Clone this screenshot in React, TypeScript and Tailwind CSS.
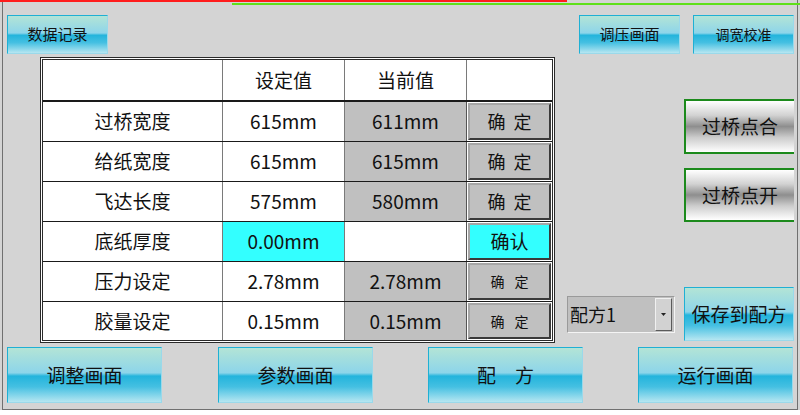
import React from 'react'

type Row = {
  label: string
  set: string
  cur: string
  btn: string
  kind: 'normal' | 'cyan' | 'small'
}

const rows: Row[] = [
  { label: '过桥宽度', set: '615mm', cur: '611mm', btn: '确 定', kind: 'normal' },
  { label: '给纸宽度', set: '615mm', cur: '615mm', btn: '确 定', kind: 'normal' },
  { label: '飞达长度', set: '575mm', cur: '580mm', btn: '确 定', kind: 'normal' },
  { label: '底纸厚度', set: '0.00mm', cur: '', btn: '确认', kind: 'cyan' },
  { label: '压力设定', set: '2.78mm', cur: '2.78mm', btn: '确 定', kind: 'small' },
  { label: '胶量设定', set: '0.15mm', cur: '0.15mm', btn: '确 定', kind: 'small' },
]

const cyanBtn =
  'flex items-center justify-center border-t border-l border-[#1fb0d4] border-r border-r-[#9ad9ea] border-b border-b-[#9ad9ea] bg-[linear-gradient(to_bottom,#b3e4d6_0%,#8dd5ea_46%,#23b4dc_52%,#45c0e2_72%,#b6e6f1_100%)] text-[#111]'

const grayBtn =
  'flex items-center justify-center border-2 border-r-0 border-[#1c8a1c] bg-[linear-gradient(to_bottom,#ffffff_0%,#d2d2d2_28%,#8e8e8e_50%,#cdcdcd_72%,#ffffff_100%)] text-[#111] text-[19px]'

function ConfirmButton({ row }: { row: Row }) {
  const bg = row.kind === 'cyan' ? 'bg-[#33ffff]' : 'bg-[#c0c0c0]'
  return (
    <div className="h-full bg-white p-[1px]">
      <div
        className={`flex h-full items-center justify-center border-2 border-t-[#a6a6a6] border-l-[#a6a6a6] border-r-[#3a3a3a] border-b-[#3a3a3a] ${bg}`}
      >
        {row.kind === 'cyan' ? (
          <span className="text-[19px]">确认</span>
        ) : row.kind === 'small' ? (
          <span className="flex gap-[10px] text-[14px]">
            <span>确</span>
            <span>定</span>
          </span>
        ) : (
          <span className="flex gap-[8px] text-[18px]">
            <span>确</span>
            <span>定</span>
          </span>
        )}
      </div>
    </div>
  )
}

function DataTable() {
  return (
    <div className="h-[286px] w-[515px] border-[3px] border-double border-[#2a2a2a] bg-white text-[19px] text-[#111]">
      <div className="grid h-[40px] grid-cols-[179px_122px_122px_86px]">
        <div />
        <div className="flex items-center justify-center border-l border-[#7a7a7a]">设定值</div>
        <div className="flex items-center justify-center border-l border-[#7a7a7a]">当前值</div>
        <div className="border-l border-[#7a7a7a]" />
      </div>
      {rows.map((row, i) => (
        <div
          key={row.label}
          className={`grid grid-cols-[179px_122px_122px_86px] border-[#1a1a1a] ${
            i === 0 ? 'h-[41px] border-t-2' : i === rows.length - 1 ? 'h-[39px] border-t' : 'h-[40px] border-t'
          }`}
        >
          <div className="flex items-center justify-center">{row.label}</div>
          <div
            className={`flex items-center justify-center border-l border-[#7a7a7a] ${
              row.kind === 'cyan' ? 'bg-[#33ffff]' : ''
            }`}
          >
            {row.set}
          </div>
          <div
            className={`flex items-center justify-center border-l border-[#7a7a7a] ${
              row.kind === 'cyan' ? 'bg-white' : 'bg-[#c0c0c0]'
            }`}
          >
            {row.cur}
          </div>
          <div className="border-l border-[#555]">
            <ConfirmButton row={row} />
          </div>
        </div>
      ))}
    </div>
  )
}

export default function App() {
  return (
    <div className="relative h-[415px] w-[800px] overflow-hidden bg-white font-['Noto_Sans_CJK_SC',sans-serif] text-[#111]">
      <div className="relative h-[410px] bg-[#d4d4d4]">
        <div className="absolute left-0 top-0 h-[2px] w-[567px] bg-[#ff1c1c]" />
        <div className="absolute left-[232px] right-0 top-[3px] h-[2px] bg-[#5fe01a]" />

        <div className="ml-[2px] flex h-[410px] w-[796px] flex-col border-x border-b border-[#707070] pt-[15px]">
          {/* top buttons */}
          <div className="flex h-[39px]">
            <div className={`${cyanBtn} ml-[4px] w-[101px] text-[15px]`}>数据记录</div>
            <div className={`${cyanBtn} ml-auto w-[101px] text-[15px]`}>调压画面</div>
            <div className={`${cyanBtn} ml-[13px] mr-[3px] w-[101px] text-[14px]`}>调宽校准</div>
          </div>

          {/* table + right controls */}
          <div className="mt-[3px] flex h-[286px]">
            <div className="ml-[37px]">
              <DataTable />
            </div>
            <div className="flex flex-1 flex-col">
              <div className={`${grayBtn} ml-[129px] mt-[42px] h-[55px] w-[110px]`}>过桥点合</div>
              <div className={`${grayBtn} ml-[129px] mt-[14px] h-[54px] w-[110px]`}>过桥点开</div>
              <div className="mb-[2px] mt-auto flex items-center">
                <div className="ml-[12px] flex h-[37px] w-[108px] items-center border border-t-[#9a9a9a] border-l-[#9a9a9a] border-r-[#f4f4f4] border-b-[#f4f4f4] bg-[#c0c0c0] pl-[2px]">
                  <span className="flex-1 text-[18px] leading-none">配方1</span>
                  <div className="mr-[2px] flex h-[33px] w-[17px] items-center justify-center border border-t-[#f0f0f0] border-l-[#f0f0f0] border-r-[#5a5a5a] border-b-[#5a5a5a] bg-[#d2d2d2]">
                    <svg width="5" height="3" viewBox="0 0 5 3">
                      <path d="M0 0h5L2.5 3z" fill="#222" />
                    </svg>
                  </div>
                </div>
                <div className={`${cyanBtn} ml-[9px] h-[54px] w-[110px] text-[19px]`}>保存到配方</div>
              </div>
            </div>
          </div>

          {/* bottom navigation */}
          <div className="mt-[4px] flex h-[56px] text-[19px]">
            <div className={`${cyanBtn} ml-[4px] w-[155px]`}>调整画面</div>
            <div className={`${cyanBtn} ml-[56px] w-[155px]`}>参数画面</div>
            <div className={`${cyanBtn} ml-[55px] w-[155px]`}>配　方</div>
            <div className={`${cyanBtn} ml-[55px] w-[155px]`}>运行画面</div>
          </div>
        </div>
      </div>
    </div>
  )
}
